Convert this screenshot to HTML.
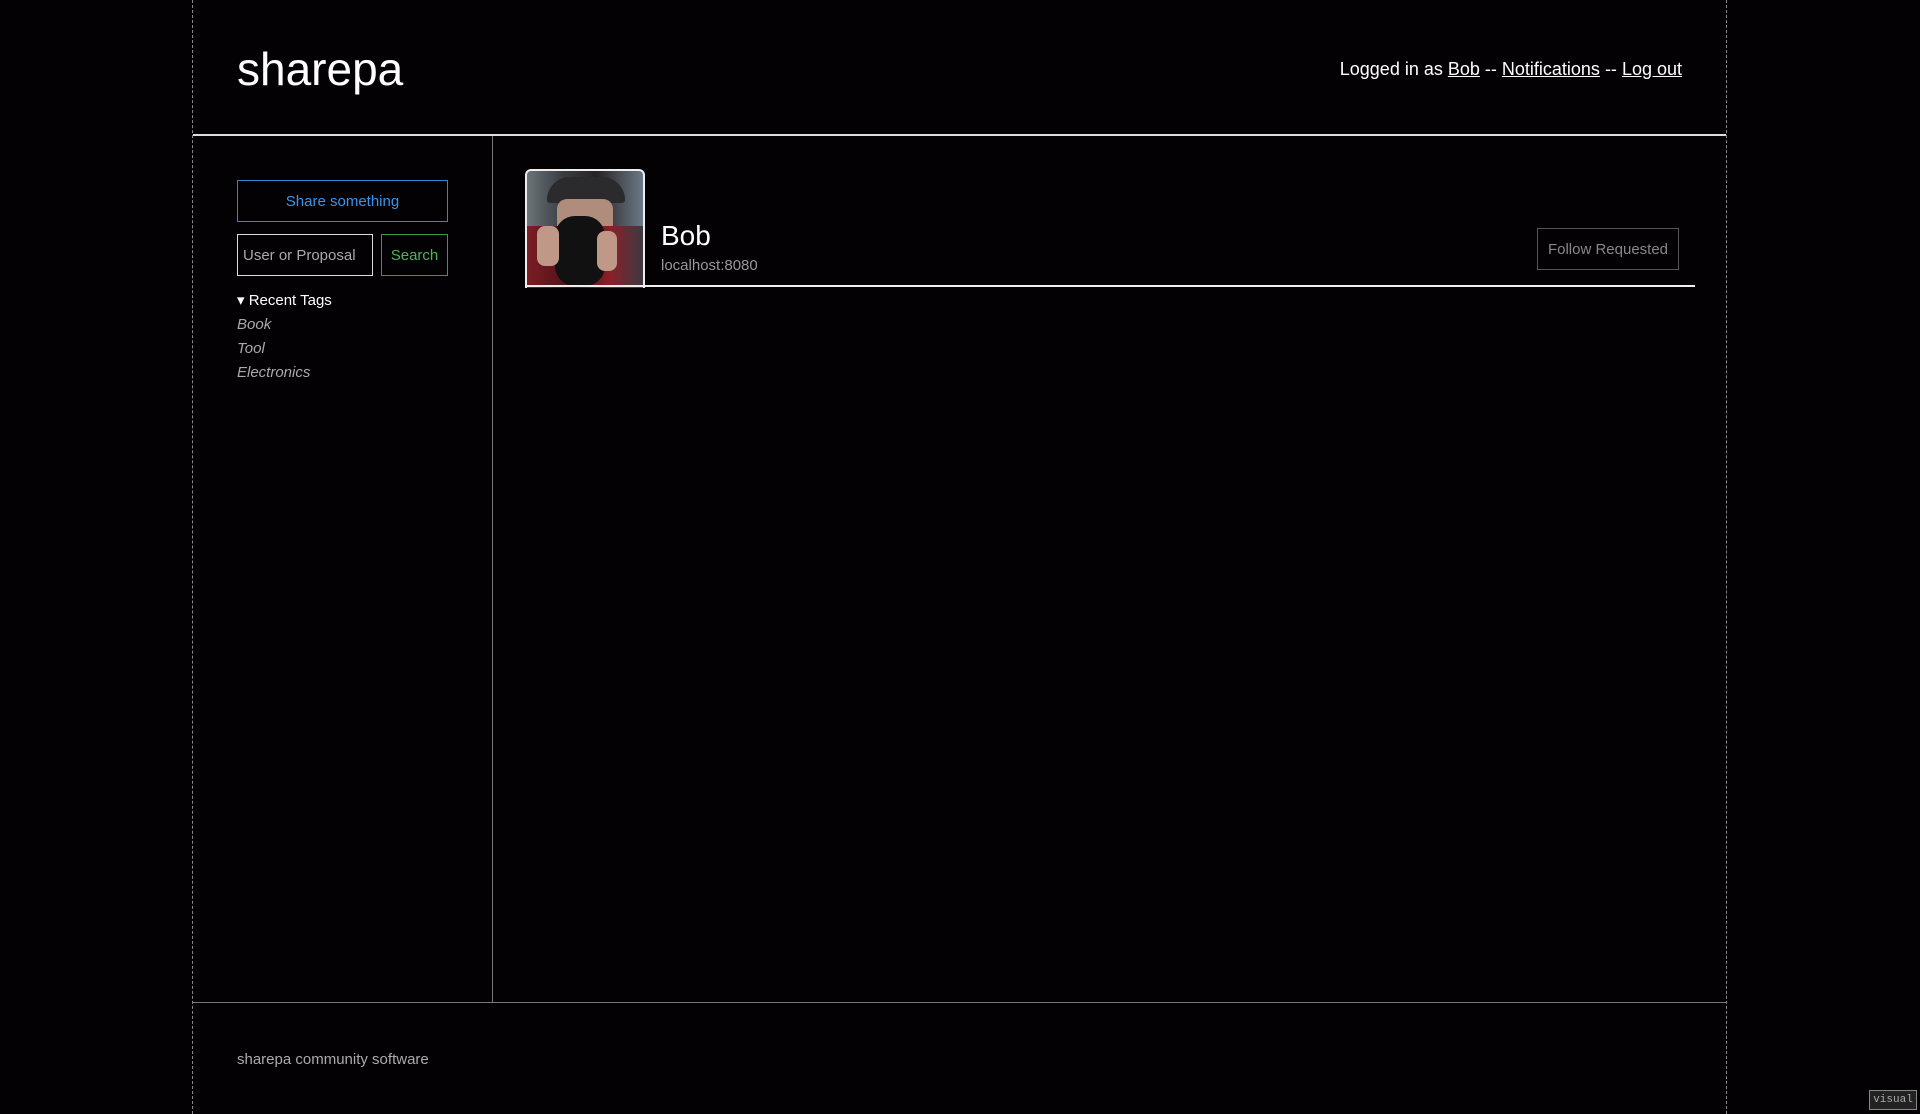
<!DOCTYPE html>
<html><head><meta charset="utf-8"><style>
*{margin:0;padding:0;box-sizing:border-box}
body{width:1920px;height:1114px;background:#030104;color:#fff;font-family:"Liberation Sans",sans-serif;position:relative;overflow:hidden}
.a{position:absolute;white-space:nowrap}
.vd{position:absolute;top:0;height:1114px;border-left:1px dashed #888}
</style></head><body>
<div class="vd" style="left:192px"></div>
<div class="vd" style="left:1726px"></div>
<div class="a" style="left:193px;top:134px;width:1533px;height:2px;background:#ddd"></div>
<div class="a" style="left:492px;top:136px;width:1px;height:866px;background:#777"></div>
<div class="a" style="left:193px;top:1002px;width:1533px;height:1px;background:#777"></div>

<div class="a" style="left:237px;top:41px;font-size:46px;line-height:56px">sharepa</div>
<div class="a" style="right:238px;top:58px;font-size:18px;line-height:22px">Logged in as <u>Bob</u> -- <u>Notifications</u> -- <u>Log out</u></div>

<div class="a" style="left:237px;top:180px;width:211px;height:42px;border:1px solid #2f86d8;color:#3a95ea;font-size:15px;line-height:42px;text-align:center">Share something</div>
<div class="a" style="left:237px;top:234px;width:136px;height:42px;border:1px solid #ddd;color:#aaa;font-size:15px;line-height:42px;padding-left:5px">User or Proposal</div>
<div class="a" style="left:381px;top:234px;width:67px;height:42px;border:1px solid #3b9a45;color:#4cb556;font-size:15px;line-height:42px;text-align:center">Search</div>
<div class="a" style="left:237px;top:292px;font-size:15px;line-height:18px">&#9662; Recent Tags</div>
<div class="a" style="left:237px;top:316px;font-size:15px;line-height:18px;font-style:italic;color:#aaa">Book</div>
<div class="a" style="left:237px;top:340px;font-size:15px;line-height:18px;font-style:italic;color:#aaa">Tool</div>
<div class="a" style="left:237px;top:364px;font-size:15px;line-height:18px;font-style:italic;color:#aaa">Electronics</div>

<div class="a" style="left:525px;top:169px;width:120px;height:119px;border:2px solid #eee;border-bottom:none;border-radius:6px 6px 0 0;overflow:hidden;background:linear-gradient(90deg,#6b7479 0%,#3a3f44 30%,#2a2224 60%,#6a7a88 100%)">
<div class="a" style="left:20px;top:6px;width:78px;height:26px;background:#2b2a2c;border-radius:30px 30px 4px 4px"></div>
<div class="a" style="left:30px;top:28px;width:56px;height:40px;background:#b08c7c;border-radius:10px"></div>
<div class="a" style="left:0;top:55px;width:118px;height:64px;background:linear-gradient(90deg,#7a1e24,#4a1016 40%,#8a2028 70%,#3a3a44)"></div>
<div class="a" style="left:28px;top:45px;width:50px;height:70px;background:#111;border-radius:20px"></div>
<div class="a" style="left:10px;top:55px;width:22px;height:40px;background:#c09888;border-radius:8px"></div>
<div class="a" style="left:70px;top:60px;width:20px;height:40px;background:#c09888;border-radius:8px"></div>
</div>
<div class="a" style="left:525px;top:285px;width:1170px;height:2px;background:#eee"></div>
<div class="a" style="left:661px;top:219px;font-size:28px;line-height:34px">Bob</div>
<div class="a" style="left:661px;top:257px;font-size:15px;line-height:18px;color:#999">localhost:8080</div>
<div class="a" style="left:1537px;top:228px;width:142px;height:42px;border:1px solid #555;color:#888;font-size:15px;line-height:42px;text-align:center">Follow Requested</div>

<div class="a" style="left:237px;top:1051px;font-size:15px;line-height:18px;color:#aaa">sharepa community software</div>
<div class="a" style="left:1869px;top:1090px;width:48px;height:20px;border:1px solid #888;background:#222;color:#aaa;font-family:'Liberation Mono',monospace;font-size:11px;line-height:18px;text-align:center">visual</div>
</body></html>
